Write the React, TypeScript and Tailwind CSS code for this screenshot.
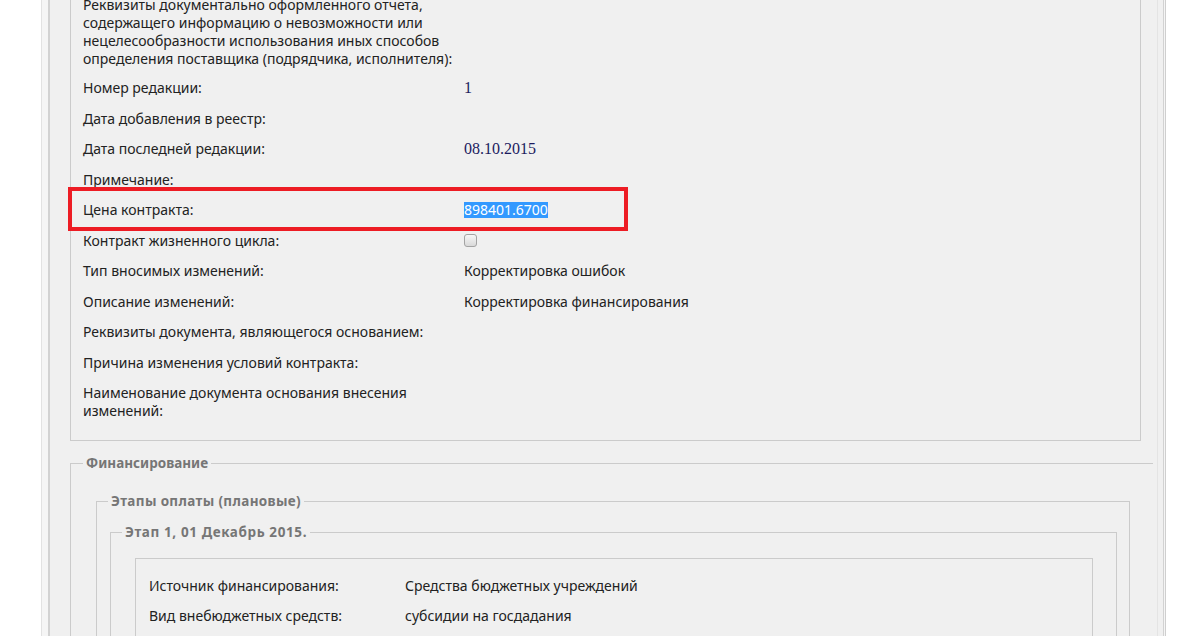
import React from "react";

const sans = { fontFamily: '"Noto Sans", "Open Sans", sans-serif' };

type Row = {
  label: React.ReactNode;
  value?: React.ReactNode;
  red?: boolean;
  first?: boolean;
};

const rows: Row[] = [
  {
    first: true,
    label: (
      <>
        Реквизиты документально оформленного отчета,
        <br />
        содержащего информацию о невозможности или
        <br />
        нецелесообразности использования иных способов
        <br />
        определения поставщика (подрядчика, исполнителя):
      </>
    ),
  },
  {
    label: "Номер редакции:",
    value: <span className="font-['Liberation_Serif',serif] text-[16px] text-[#1b1b5e]">1</span>,
  },
  { label: "Дата добавления в реестр:" },
  {
    label: "Дата последней редакции:",
    value: <span className="font-['Liberation_Serif',serif] text-[16px] text-[#1b1b5e]">08.10.2015</span>,
  },
  { label: "Примечание:" },
  {
    label: "Цена контракта:",
    value: <span className="bg-[#3399ff] text-white leading-[16px] inline-block">898401.6700</span>,
    red: true,
  },
  {
    label: "Контракт жизненного цикла:",
    value: (
      <span className="inline-block w-[13px] h-[13px] rounded-[3px] border border-[#a3a3a3] bg-linear-to-b from-[#f6f6f6] to-[#d9d9d9] align-middle" />
    ),
  },
  { label: "Тип вносимых изменений:", value: "Корректировка ошибок" },
  { label: "Описание изменений:", value: "Корректировка финансирования" },
  { label: "Реквизиты документа, являющегося основанием:" },
  { label: "Причина изменения условий контракта:" },
  {
    label: (
      <>
        Наименование документа основания внесения
        <br />
        изменений:
      </>
    ),
  },
];

function Legend({ children, cls }: { children: React.ReactNode; cls: string }) {
  return (
    <legend
      className={`${cls} px-[3px] text-[13.5px] font-bold leading-[18px] text-[#767676]`}
      style={sans}
    >
      {children}
    </legend>
  );
}

export default function App() {
  return (
    <div className="h-[636px] overflow-hidden bg-white text-[14px] text-[#222]" style={sans}>
      <div className="ml-[41px] w-[1125px] min-h-[700px] border-l border-r border-l-[#e2e2e2] border-r-[#cfcfcf] bg-[#f5f5f5] pl-[6px] pr-[1px]">
        <div className="min-h-[700px] border-l-2 border-r border-[#d2d2d2] bg-[#f0f0f0]">
          <div className="min-h-[700px] w-[1108px] border-r border-[#e4e4e4]">
            {/* top box */}
            <div className="ml-[20px] -mt-[10.25px] w-[1071px] border-x border-b border-[#cbcbcb] pl-[12px] pb-[14px]">
              {rows.map((r, i) => (
                <div
                  key={i}
                  className={`relative flex leading-[18px] ${r.first ? "pt-[6.25px] pb-[4.75px]" : "py-[6.25px]"}`}
                >
                  {r.red && (
                    <div className="pointer-events-none absolute left-[-15px] top-[-8px] h-[44px] w-[560px] border-4 border-[#ed1c24]" />
                  )}
                  <div className="w-[381px] shrink-0">{r.label}</div>
                  <div className="flex items-center">{r.value}</div>
                </div>
              ))}
            </div>

            {/* Финансирование */}
            <fieldset className="ml-[20px] mt-[13px] w-[1083px] border-t border-l border-[#cbcbcb] pt-[20px]">
              <Legend cls="ml-[12px]">Финансирование</Legend>
              <fieldset className="ml-[25px] w-[1034px] border border-b-0 border-[#cbcbcb] pt-[13px]">
                <Legend cls="ml-[11px] tracking-[0.35px]">Этапы оплаты (плановые)</Legend>
                <fieldset className="ml-[13px] w-[1007px] border border-b-0 border-[#cbcbcb] pt-[17px]">
                  <Legend cls="ml-[11px] tracking-[0.6px]">Этап 1, 01 Декабрь 2015.</Legend>
                  <div className="ml-[24px] w-[958px] h-[120px] border border-b-0 border-[#cbcbcb] pl-[13px] pt-[11.5px]">
                    {[
                      ["Источник финансирования:", "Средства бюджетных учреждений"],
                      ["Вид внебюджетных средств:", "субсидии на госдадания"],
                    ].map(([l, v], i) => (
                      <div key={i} className="flex py-[6px] leading-[18px]">
                        <div className="w-[256px] shrink-0">{l}</div>
                        <div>{v}</div>
                      </div>
                    ))}
                  </div>
                </fieldset>
              </fieldset>
            </fieldset>
          </div>
        </div>
      </div>
    </div>
  );
}
